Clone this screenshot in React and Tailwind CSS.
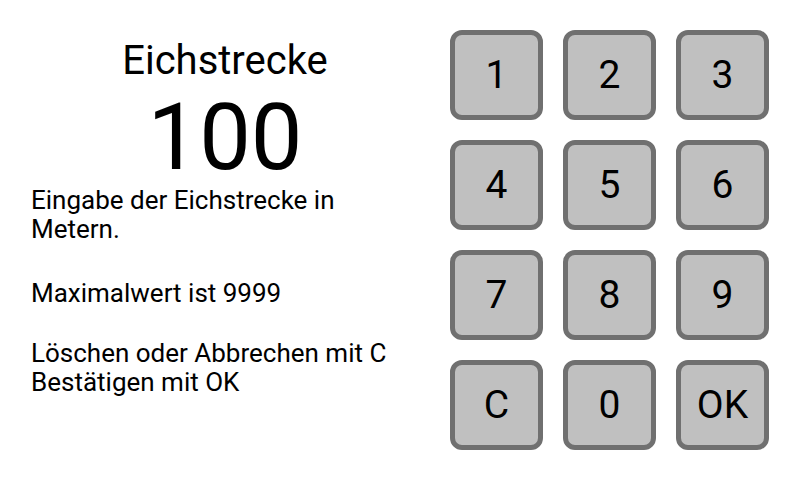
import React, { useState } from 'react';

const KEYS = ['1', '2', '3', '4', '5', '6', '7', '8', '9', 'C', '0', 'OK'];

const Key = ({ label, onPress }) => (
  <button
    type="button"
    onClick={() => onPress(label)}
    className="w-[93px] h-[90px] rounded-[12px] border-[5px] border-[#707070] bg-[#c0c0c0] flex items-center justify-center text-[39px] leading-none text-black"
  >
    {label}
  </button>
);

export default function App() {
  const [value, setValue] = useState('100');

  const handlePress = (key) => {
    if (key === 'C') {
      setValue('');
      return;
    }
    if (key === 'OK') return;
    // Maximalwert ist 9999
    if (value.length >= 4) return;
    setValue((v) => (v === '0' ? key : v + key));
  };

  return (
    <div
      className="w-[800px] h-[480px] bg-white flex text-black"
      style={{ fontFamily: 'Roboto, "Liberation Sans", sans-serif' }}
    >
      {/* Anzeige und Hinweise */}
      <div className="w-[450px] flex flex-col">
        <h1 className="mt-[37px] text-center text-[40px] leading-[48px] font-normal">
          Eichstrecke
        </h1>
        <div className="mt-[7px] text-center text-[92px] leading-[92px] h-[92px]">
          {value}
        </div>
        <div className="mt-[2px] ml-[31px] w-[375px] text-[26px] leading-[29px]">
          <p>Eingabe der Eichstrecke in Metern.</p>
          <p className="mt-[35px]">Maximalwert ist 9999</p>
          <p className="mt-[31px]">
            Löschen oder Abbrechen mit C
            <br />
            Bestätigen mit OK
          </p>
        </div>
      </div>

      {/* Ziffernblock */}
      <div className="pt-[30px] grid grid-cols-[repeat(3,93px)] gap-x-[20px] gap-y-[20px] content-start">
        {KEYS.map((k) => (
          <Key key={k} label={k} onPress={handlePress} />
        ))}
      </div>
    </div>
  );
}
